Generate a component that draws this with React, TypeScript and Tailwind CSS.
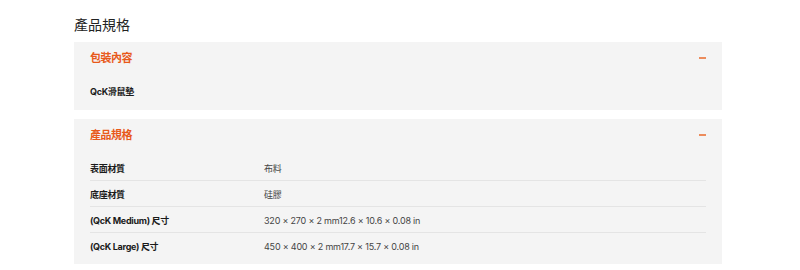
const font = { fontFamily: '"Inter", "Noto Sans CJK TC", sans-serif' };

const specs = [
  { label: "表面材質", value: "布料" },
  { label: "底座材質", value: "硅膠" },
  { label: "(QcK Medium) 尺寸", value: "320 × 270 × 2 mm12.6 × 10.6 × 0.08 in" },
  { label: "(QcK Large) 尺寸", value: "450 × 400 × 2 mm17.7 × 15.7 × 0.08 in" },
];

const Header = ({ title }: { title: string }) => (
  <div className="flex h-[30px] items-center justify-between px-4 pt-[2px]">
    <h3 className="text-[11px] font-bold tracking-[-0.5px] text-[#e8591a]">{title}</h3>
    <span className="block h-[2px] w-[7px] bg-[#ec8c5c]" />
  </div>
);

export default function App() {
  return (
    <div className="min-h-[270px] bg-white pl-[74px] pt-[15px]" style={font}>
      <h2 className="h-[20px] text-[14px] leading-[20px] text-[#222]">產品規格</h2>
      <div className="mt-[7px] flex w-[648px] flex-col gap-[9px]">
        <section className="bg-[#f4f4f4] pb-[6px]">
          <Header title="包裝內容" />
          <div className="px-4 pt-[6px]">
            <div className="flex h-[26px] items-center pt-[2px] text-[9px] font-bold tracking-[-0.3px] text-[#1a1a1a]">QcK滑鼠墊</div>
          </div>
        </section>
        <section className="bg-[#f4f4f4] pb-[5px]">
          <Header title="產品規格" />
          <div className="px-4 pt-[6px]">
            {specs.map((s, i) => (
              <div
                key={s.label}
                className={`grid h-[26px] grid-cols-[174px_1fr] items-center pt-[2px] ${i < specs.length - 1 ? "border-b border-[#e4e4e4]" : ""}`}
              >
                <span className="text-[9px] font-bold tracking-[-0.3px] text-[#1a1a1a]">{s.label}</span>
                <span className="text-[9px] tracking-[-0.2px] text-[#444]">{s.value}</span>
              </div>
            ))}
          </div>
        </section>
      </div>
    </div>
  );
}
